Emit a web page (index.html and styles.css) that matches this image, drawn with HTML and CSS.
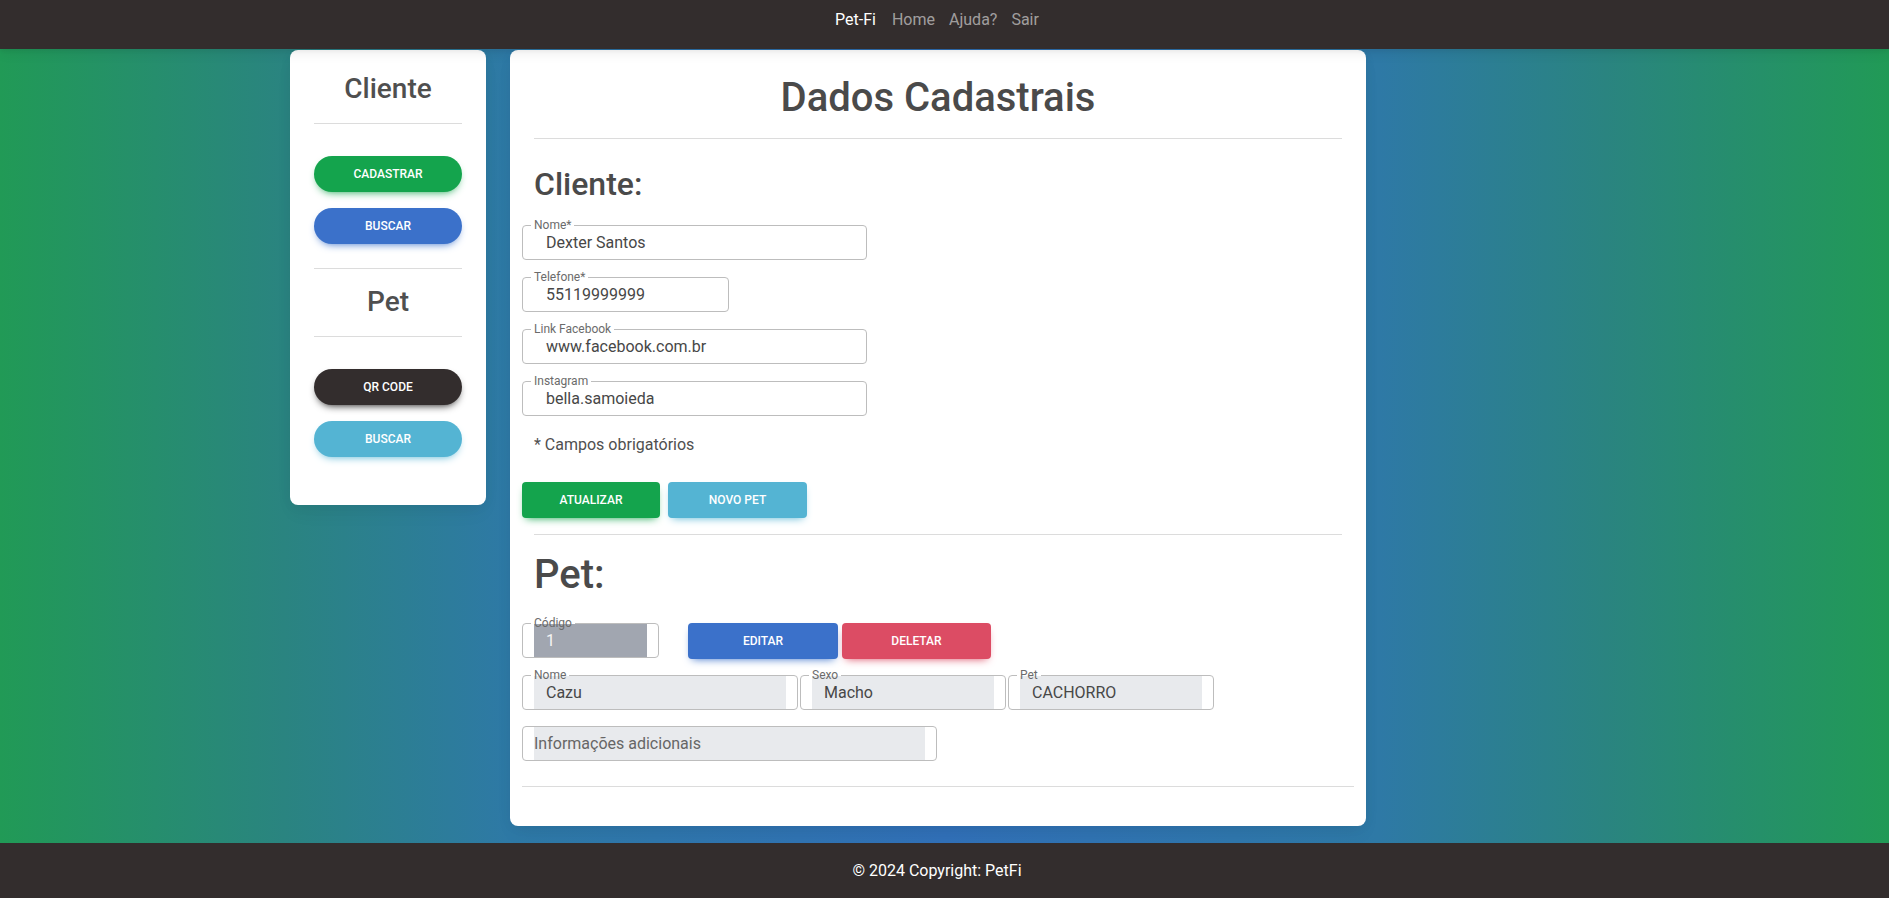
FILE: index.html
```html
<!DOCTYPE html>
<html lang="pt-BR">
<head>
<meta charset="utf-8">
<title>Pet-Fi - Dados Cadastrais</title>
<link rel="stylesheet" href="styles.css">
</head>
<body>
<header class="navbar">
  <nav class="nav">
    <a class="brand">Pet-Fi</a>
    <a class="nav-link">Home</a>
    <a class="nav-link">Ajuda?</a>
    <a class="nav-link">Sair</a>
  </nav>
</header>

<main class="main">
  <div class="container">
    <aside class="card sidebar">
      <h3 class="side-title">Cliente</h3>
      <hr class="side-hr">
      <button class="btn btn-rounded btn-success side-first">Cadastrar</button>
      <button class="btn btn-rounded btn-primary side-next">Buscar</button>
      <hr class="side-hr side-hr-mid">
      <h3 class="side-title side-title-pet">Pet</h3>
      <hr class="side-hr">
      <button class="btn btn-rounded btn-dark side-first">QR Code</button>
      <button class="btn btn-rounded btn-info side-next">Buscar</button>
    </aside>

    <section class="card content">
      <h1 class="title">Dados Cadastrais</h1>
      <hr class="rule">
      <h2 class="section-title">Cliente:</h2>

      <div class="field field-first w-345">
        <span class="label">Nome*</span>
        <div class="field-input">Dexter Santos</div>
      </div>
      <div class="field w-207">
        <span class="label">Telefone*</span>
        <div class="field-input">55119999999</div>
      </div>
      <div class="field w-345">
        <span class="label">Link Facebook</span>
        <div class="field-input">www.facebook.com.br</div>
      </div>
      <div class="field w-345">
        <span class="label">Instagram</span>
        <div class="field-input">bella.samoieda</div>
      </div>

      <p class="note">* Campos obrigatórios</p>

      <div class="actions">
        <button class="btn btn-success w-138">Atualizar</button>
        <button class="btn btn-info w-139">Novo Pet</button>
      </div>

      <hr class="rule">
      <h1 class="pet-title">Pet:</h1>

      <div class="row row-code">
        <div class="field field-code w-137">
          <span class="label">Código</span>
          <div class="field-input">1</div>
        </div>
        <button class="btn btn-primary w-150 edit-btn">Editar</button>
        <button class="btn btn-danger w-149 del-btn">Deletar</button>
      </div>

      <div class="row row-pet">
        <div class="field field-disabled w-276">
          <span class="label">Nome</span>
          <div class="field-input">Cazu</div>
        </div>
        <div class="field field-disabled w-206">
          <span class="label">Sexo</span>
          <div class="field-input">Macho</div>
        </div>
        <div class="field field-disabled w-206">
          <span class="label">Pet</span>
          <div class="field-input">CACHORRO</div>
        </div>
      </div>

      <div class="field field-disabled field-info w-415">
        <div class="field-input placeholder">Informações adicionais</div>
      </div>

      <hr class="rule rule-full">
    </section>
  </div>
</main>

<footer class="footer">© 2024 Copyright: PetFi</footer>
</body>
</html>
```

FILE: styles.css
```css
* { box-sizing: border-box; }

html, body { height: 100%; }

body {
  margin: 0;
  font-family: Roboto, "Liberation Sans", Arial, sans-serif;
  color: #4f4f4f;
  display: flex;
  flex-direction: column;
  min-height: 100vh;
  background: #332d2d;
}

/* ---------- navbar ---------- */
.navbar {
  background: #332d2d;
  height: 49px;
  padding: 8px 15px 0 0;
  display: flex;
  justify-content: center;
  position: relative;
  z-index: 2;
  box-shadow: 0 4px 12px 0 rgba(0,0,0,.07), 0 2px 4px rgba(0,0,0,.05);
}
.nav {
  display: flex;
  align-items: center;
  height: 24px;
  font-size: 16px;
  line-height: 24px;
}
.brand {
  color: #fff;
  font-weight: 400;
  margin-right: 16px;
}
.nav-link {
  color: rgba(255,255,255,.55);
  margin-right: 14px;
}
.nav-link:last-child { margin-right: 0; }

/* ---------- main ---------- */
.main {
  flex: 1;
  padding: 1px 13px 16px 0;
  background: linear-gradient(90deg,
    #219a56 0%,
    #2a8480 15%,
    #2e79a6 27%,
    #3170b8 50%,
    #2e79a6 73%,
    #2a8480 85%,
    #219a56 100%);
}
.container {
  width: 1296px;
  margin: 0 auto;
  display: flex;
  align-items: flex-start;
  gap: 24px;
}

.card {
  background: #fff;
  border-radius: 8px;
  box-shadow: 0 2px 15px -3px rgba(0,0,0,.07), 0 10px 20px -2px rgba(0,0,0,.04);
}

/* ---------- sidebar ---------- */
.sidebar {
  width: 196px;
  padding: 22px 24px 48px;
  display: flex;
  flex-direction: column;
}
.side-title {
  margin: 0;
  text-align: center;
  font-size: 28px;
  line-height: 34px;
  font-weight: 500;
  color: #4f4f4f;
}
.side-title-pet { margin-top: 16px; }
.side-hr {
  border: 0;
  border-top: 1px solid #dcdcdc;
  margin: 17px 0 0;
  height: 0;
}
.side-hr-mid { margin-top: 24px; }
.side-first { margin-top: 32px; }
.side-next { margin-top: 16px; }

/* ---------- buttons ---------- */
.btn {
  border: 0;
  height: 36px;
  padding: 0 12px;
  font-family: Roboto, "Liberation Sans", Arial, sans-serif;
  font-size: 12px;
  font-weight: 500;
  text-transform: uppercase;
  color: #fff;
  border-radius: 4px;
  cursor: pointer;
  display: block;
}
.btn-rounded { border-radius: 18px; width: 100%; }
.btn-success { background: #14a44d; box-shadow: 0 4px 9px -4px #14a44d; }
.btn-primary { background: #3b71ca; box-shadow: 0 4px 9px -4px #3b71ca; }
.btn-dark    { background: #332d2d; box-shadow: 0 4px 9px -4px #030202; }
.btn-info    { background: #54b4d3; box-shadow: 0 4px 9px -4px #54b4d3; }
.btn-danger  { background: #dc4c64; box-shadow: 0 4px 9px -4px #dc4c64; }

/* ---------- content ---------- */
.content {
  width: 856px;
  padding: 24px 12px 39px;
}
.title {
  margin: 0 12px;
  text-align: center;
  font-size: 40px;
  line-height: 48px;
  font-weight: 500;
  color: #4a4a4a;
}
.rule {
  border: 0;
  border-top: 1px solid #dcdcdc;
  margin: 16px 12px 0;
  height: 0;
}
.rule-full { margin: 25px 0 0; }
.section-title {
  margin: 26px 12px 0;
  font-size: 32px;
  line-height: 38px;
  font-weight: 500;
  color: #4a4a4a;
}
.pet-title {
  margin: 16px 12px 0;
  font-size: 40px;
  line-height: 48px;
  font-weight: 500;
  color: #4a4a4a;
}

/* ---------- fields ---------- */
.field {
  position: relative;
  height: 35px;
  border: 1px solid #bdbdbd;
  border-radius: 4px;
  padding: 0 11px 0 11px;
  margin-top: 17px;
  display: flex;
}
.field-first { margin-top: 22px; }
.field-input {
  flex: 1;
  display: flex;
  align-items: center;
  padding-left: 12px;
  font-size: 16px;
  color: #474747;
  white-space: nowrap;
}
.label {
  position: absolute;
  left: 8px;
  top: -8px;
  padding: 0 3px;
  font-size: 12px;
  line-height: 14px;
  color: #6b6b6b;
  background: linear-gradient(#fff 8px, transparent 8px);
}
.field-disabled .field-input { background: #e8eaed; }
.field-code .field-input { background: #a1a6b0; color: #f4f4f4; }
.field-info { margin-top: 16px; }
.field-info .field-input { padding-left: 0; color: #666; }

.note {
  margin: 17px 0 0;
  padding-left: 12px;
  font-size: 16px;
  line-height: 24px;
  color: #4f4f4f;
}

.actions {
  display: flex;
  gap: 8px;
  margin-top: 25px;
}

.row { display: flex; align-items: flex-start; }
.row-code { margin-top: 24px; }
.row-code .field { margin-top: 0; }
.edit-btn { margin-left: 29px; }
.del-btn { margin-left: 4px; }
.row-pet { margin-top: 16px; gap: 2px; }
.row-pet .field { margin-top: 0; }

.w-345 { width: 345px; }
.w-207 { width: 207px; }
.w-138 { width: 138px; }
.w-139 { width: 139px; }
.w-137 { width: 137px; }
.w-150 { width: 150px; }
.w-149 { width: 149px; }
.w-276 { width: 276px; }
.w-206 { width: 206px; }
.w-415 { width: 415px; }

/* ---------- footer ---------- */
.footer {
  background: #332d2d;
  color: #fff;
  text-align: center;
  font-size: 16px;
  line-height: 24px;
  height: 55px;
  padding: 16px 15px 0 0;
}
```
